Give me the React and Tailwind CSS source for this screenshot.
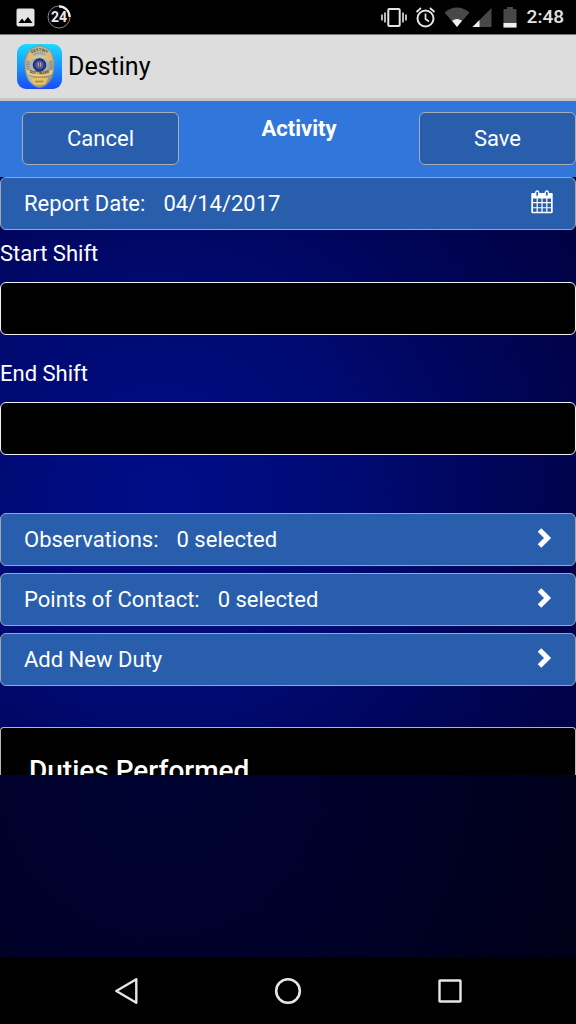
import { useState } from "react";

const rowClass =
  "flex h-[53px] w-full items-center justify-between rounded-md border border-[#a3a5aa] bg-[#285eac] pr-[22px] pl-[23px] text-left";

const inputClass =
  "h-[53px] w-full rounded-md border border-[#f0f0f0] bg-black px-[23px] text-white outline-none";

function BadgeLogo() {
  return (
    <svg width="45" height="45" viewBox="0 0 45 45" aria-hidden="true">
      <defs>
        <linearGradient id="tile" x1="0" y1="0" x2="0" y2="1">
          <stop offset="0" stopColor="#18dcff" />
          <stop offset="0.5" stopColor="#1996fb" />
          <stop offset="1" stopColor="#1a4cf4" />
        </linearGradient>
        <linearGradient id="silver" x1="0" y1="0" x2="1" y2="1">
          <stop offset="0" stopColor="#a7a698" />
          <stop offset="0.5" stopColor="#b9b9b4" />
          <stop offset="1" stopColor="#7d7f82" />
        </linearGradient>
        <path id="arcTop" d="M12 11.500 Q22.500 3 33 11.500" />
        <path id="arcLow" d="M10 28 Q22.500 33 35 28" />
      </defs>
      <rect width="45" height="45" rx="9" fill="url(#tile)" />
      <path
        d="M22.500 1.500c3 0 4.500 1.500 7 2.500 3.500 1.500 5.500 4.500 6.500 8 1.200 3 1.500 6 1.200 9.500-.2 4-.6 8-2.400 12-1.800 4.500-6.300 9.500-12.300 10-6-.5-10.500-5.500-12.300-10-1.800-4-2.200-8-2.400-12C7.500 18 7.800 15 9 12c1-3.500 3-6.500 6.500-8 2.500-1 4-2.500 7-2.500z"
        fill="url(#silver)"
        stroke="#85868a"
        strokeWidth=".8"
      />
      <ellipse cx="22.500" cy="21" rx="11.500" ry="13" fill="none" stroke="#8c8e8e" strokeDasharray="1 1" strokeWidth="3" />
      <path d="M11 12.500C13 7 17 4.500 22.500 4.500S32 7 34 12.500l-3 1.200C29 9.500 26.500 8 22.500 8S16 9.500 14 13.700z" fill="#d3c28c" />
      <path d="M9.500 15.500l4.500-6 3 2-3 6.500zM35.500 15.500l-4.500-6-3 2 3 6.500z" fill="#e0bd68" />
      <path d="M15 12.500q7.500-3 15 0l-1 2.500q-6.500-3-13 0z" fill="#d5c594" />
      <path d="M8.500 25q14 6 28 0l-1.500 5.500q-12.500 4.500-25 0z" fill="#e6cf88" stroke="#a98f4c" strokeWidth=".5" />
      <path d="M14 34h17l-2.500 6q-6 2-12 0z" fill="#e7c35f" />
      <circle cx="22.500" cy="21" r="6.300" fill="#21398f" stroke="#172b6d" strokeWidth="1" />
      <circle cx="22.500" cy="21" r="4" fill="#4562a5" />
      <path d="M20.800 18.500h3.400v3.500l-1.700 2-1.700-2z" fill="#c09a9a" />
      <path d="M22.500 18v6" stroke="#8c3442" strokeWidth=".8" />
      <g fill="#4c4630" fontFamily="Roboto, sans-serif" fontWeight="700" textAnchor="middle">
        <text fontSize="4">
          <textPath href="#arcTop" startOffset="50%">DESTINY</textPath>
        </text>
        <text fontSize="4">
          <textPath href="#arcLow" startOffset="50%">SOFTWARE</textPath>
        </text>
      </g>
      <path d="M18.500 37.500h8" stroke="#7c6935" strokeDasharray="1.300 .6" strokeWidth="1.500" />
    </svg>
  );
}

function CalendarIcon() {
  return (
    <svg className="mb-1" width="22" height="24" viewBox="0 0 22 24" aria-hidden="true">
      <path d="M1.500 3h19a1.200 1.200 0 0 1 1.200 1.200V22a1.200 1.200 0 0 1-1.200 1.200h-19A1.200 1.200 0 0 1 .3 22V4.200A1.200 1.200 0 0 1 1.500 3z" fill="white" />
      <path
        d="M2 8.500h3.600v3.600H2zM6.800 8.500h3.600v3.600H6.800zM11.600 8.500h3.600v3.600h-3.600zM16.400 8.500H20v3.600h-3.600zM2 13.200h3.600v4H2zM6.800 13.200h3.600v4H6.800zM11.600 13.200h3.600v4h-3.600zM16.400 13.200H20v4h-3.600zM2 18.300h3.600v3.400H2zM6.800 18.300h3.600v3.400H6.800zM11.600 18.300h3.600v3.400h-3.600zM16.400 18.300H20v3.400h-3.600z"
        fill="#285eac"
      />
      <rect x="4.700" y="1" width="3" height="5.500" rx="1.500" fill="#285eac" stroke="white" strokeWidth="1.300" />
      <rect x="14.300" y="1" width="3" height="5.500" rx="1.500" fill="#285eac" stroke="white" strokeWidth="1.300" />
    </svg>
  );
}

function ChevronIcon() {
  return (
    <svg className="mb-1" width="16" height="20" viewBox="0 0 16 20" aria-hidden="true">
      <path d="M2.500 2l8 8-8 8" fill="none" stroke="white" strokeWidth="5" />
    </svg>
  );
}

function StatusBar() {
  return (
    <div className="flex h-[34px] items-center justify-between bg-black pr-3 pl-4 text-[#e4e4e4]">
      <div className="flex items-center gap-3">
        <svg width="19" height="19" viewBox="0 0 19 19" aria-hidden="true">
          <rect x=".5" y=".5" width="18" height="18" rx="2" fill="#e4e4e4" />
          <path d="M2.500 15l3.500-4.500 2.300 3L12 9l4.500 6z" fill="black" />
        </svg>
        <svg width="24" height="24" viewBox="0 0 24 24">
          <circle cx="12" cy="12" r="11" fill="none" stroke="#858585" strokeWidth="1" />
          <path d="M12 1.300A10.700 10.700 0 0 1 22.700 12" fill="none" stroke="#f0f0f0" strokeWidth="2.200" />
          <text x="12" y="17" fill="#e8e8e8" fontFamily="Roboto, sans-serif" fontSize="14" fontWeight="700" textAnchor="middle">
            24
          </text>
        </svg>
      </div>
      <div className="flex items-center">
        <svg width="138" height="24" viewBox="0 0 138 24" aria-hidden="true">
          {/* vibrate */}
          <rect x="7.300" y="4" width="11.400" height="17" rx="1" fill="none" stroke="#e4e4e4" strokeWidth="2" />
          <path d="M1 9.500v6M4 7.500v10M22 7.500v10M25 9.500v6" stroke="#e4e4e4" strokeWidth="1.600" />
          {/* alarm */}
          <circle cx="44.500" cy="13.500" r="8" fill="none" stroke="#e4e4e4" strokeWidth="2" />
          <path d="M35.500 7l4.500-4M53.500 7L49 3M44.500 8.500v5.500l3.500 2.500" fill="none" stroke="#e4e4e4" strokeWidth="1.700" />
          {/* wifi */}
          <path d="M63.500 7.500q12.500-10 25 0L76 22z" fill="#484848" />
          <path d="M71 15.800q5-3.500 10 0L76 22z" fill="#f0f0f0" />
          {/* signal */}
          <path d="M110.500 3v19h-19z" fill="#484848" />
          <path d="M98.500 15v7h-7z" fill="#f0f0f0" />
          {/* battery */}
          <path d="M126 2h6v2h3.500v18.500h-13V4h3.500z" fill="#484848" />
          <path d="M122.500 18h13v4.500h-13z" fill="#f0f0f0" />
        </svg>
        <span className="ml-2 text-[19px] leading-6 font-medium">2:48</span>
      </div>
    </div>
  );
}

function SelectRow({ label, value }) {
  return (
    <button type="button" className={rowClass}>
      <span className="flex gap-[18px]">
        <span>{label}</span>
        {value && <span>{value}</span>}
      </span>
      <ChevronIcon />
    </button>
  );
}

function NavBar() {
  return (
    <nav className="flex h-[67px] items-center justify-center gap-[130px] bg-black">
      <button type="button" aria-label="Back">
        <svg width="32" height="32" viewBox="0 0 32 32">
          <path d="M26.300 4.200v23.600L6.300 16z" fill="none" stroke="#e6e6e6" strokeWidth="2.400" strokeLinejoin="round" />
        </svg>
      </button>
      <button type="button" aria-label="Home">
        <svg width="32" height="32" viewBox="0 0 32 32">
          <circle cx="16" cy="16" r="11.800" fill="none" stroke="#e6e6e6" strokeWidth="2.600" />
        </svg>
      </button>
      <button type="button" aria-label="Recent apps">
        <svg width="32" height="32" viewBox="0 0 32 32">
          <rect x="5.500" y="5.500" width="21" height="21" rx=".5" fill="none" stroke="#e6e6e6" strokeWidth="2.400" />
        </svg>
      </button>
    </nav>
  );
}

export default function App() {
  const [startShift, setStartShift] = useState("");
  const [endShift, setEndShift] = useState("");

  return (
    <div className="flex min-h-screen flex-col bg-black font-[Roboto,sans-serif] text-[22px] leading-8 text-white">
      <StatusBar />

      <div className="flex h-[67px] items-center gap-[6px] border-t border-b-3 border-t-[#777] border-b-[#c6c6c6] bg-[#dddddd] pl-[17px]">
        <BadgeLogo />
        <span className="text-[25px] text-black">Destiny</span>
      </div>

      <header className="flex h-[76px] items-start bg-[#3176da] pt-[11px] pl-[22px]">
        <button type="button" className="h-[53px] w-[157px] rounded-md border border-[#a9adb3] bg-[#285eac]">
          Cancel
        </button>
        <h1 className="flex-1 text-center leading-[34px] font-bold">Activity</h1>
        <button type="button" className="h-[53px] w-[157px] rounded-md border border-[#a9adb3] bg-[#285eac]">
          Save
        </button>
      </header>

      <main className="bg-[radial-gradient(circle_at_28%_54%,#000d88_0%,#000a74_35%,#00034f_75%,#000040_100%)]">
        <button type="button" className={rowClass}>
          <span className="flex gap-[18px]">
            <span>Report Date:</span>
            <span>04/14/2017</span>
          </span>
          <CalendarIcon />
        </button>

        <div className="flex flex-col gap-[15px] pt-2">
          <div className="flex flex-col gap-3">
            <label htmlFor="start-shift">Start Shift</label>
            <input
              id="start-shift"
              type="text"
              className={inputClass}
              value={startShift}
              onChange={(e) => setStartShift(e.target.value)}
            />
          </div>
          <div className="flex flex-col gap-3 pt-2">
            <label htmlFor="end-shift">End Shift</label>
            <input
              id="end-shift"
              type="text"
              className={inputClass}
              value={endShift}
              onChange={(e) => setEndShift(e.target.value)}
            />
          </div>
        </div>

        <div className="flex flex-col gap-[7px] pt-[58px]">
          <SelectRow label="Observations:" value="0 selected" />
          <SelectRow label="Points of Contact:" value="0 selected" />
          <SelectRow label="Add New Duty" />
        </div>

        <section className="mt-[41px] h-12 overflow-hidden rounded-t-sm border-x border-t border-[#b5b5b5] bg-black pt-[27px] pl-7">
          <h2 className="text-[28px] font-medium">Duties Performed</h2>
        </section>
      </main>

      <div className="flex-1 bg-[radial-gradient(circle_at_28%_0%,#000232_0%,#00012a_45%,#000018_100%)]" />

      <NavBar />
    </div>
  );
}
